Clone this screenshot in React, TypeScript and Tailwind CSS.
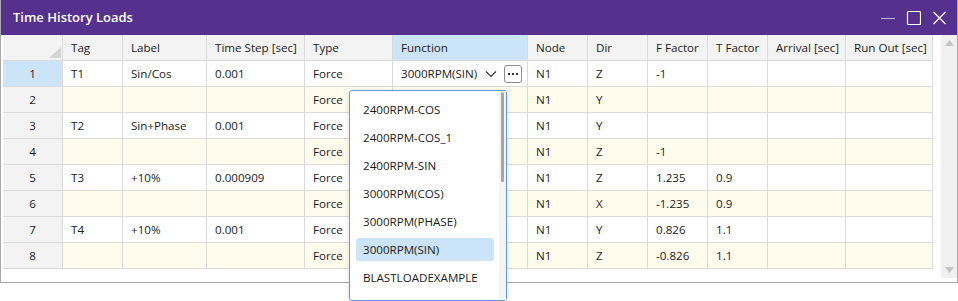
import React from 'react'

type Row = {
  no: number
  tag: string
  label: string
  step: string
  type: string
  fn: string
  node: string
  dir: string
  f: string
  t: string
}

const rows: Row[] = [
  { no: 1, tag: 'T1', label: 'Sin/Cos', step: '0.001', type: 'Force', fn: '3000RPM(SIN)', node: 'N1', dir: 'Z', f: '-1', t: '' },
  { no: 2, tag: '', label: '', step: '', type: 'Force', fn: '', node: 'N1', dir: 'Y', f: '', t: '' },
  { no: 3, tag: 'T2', label: 'Sin+Phase', step: '0.001', type: 'Force', fn: '', node: 'N1', dir: 'Y', f: '', t: '' },
  { no: 4, tag: '', label: '', step: '', type: 'Force', fn: '', node: 'N1', dir: 'Z', f: '-1', t: '' },
  { no: 5, tag: 'T3', label: '+10%', step: '0.000909', type: 'Force', fn: '', node: 'N1', dir: 'Z', f: '1.235', t: '0.9' },
  { no: 6, tag: '', label: '', step: '', type: 'Force', fn: '', node: 'N1', dir: 'X', f: '-1.235', t: '0.9' },
  { no: 7, tag: 'T4', label: '+10%', step: '0.001', type: 'Force', fn: '', node: 'N1', dir: 'Y', f: '0.826', t: '1.1' },
  { no: 8, tag: '', label: '', step: '', type: 'Force', fn: '', node: 'N1', dir: 'Z', f: '-0.826', t: '1.1' },
]

const functions = [
  '2400RPM-COS',
  '2400RPM-COS_1',
  '2400RPM-SIN',
  '3000RPM(COS)',
  '3000RPM(PHASE)',
  '3000RPM(SIN)',
  'BLASTLOADEXAMPLE',
]

const cell = 'h-full flex items-center pl-2 border-r border-[#dadada] shrink-0 whitespace-nowrap'

export default function App() {
  return (
    <div
      className="relative w-[958px] h-[301px] bg-white text-[11.6px] text-[#1b1b1b]"
      style={{ fontFamily: '"Open Sans", "Noto Sans", sans-serif' }}
    >
      {/* Window */}
      <div className="w-[958px] h-[283px] border border-[#a9a9a9] flex flex-col">
        {/* Title bar */}
        <div className="h-[35px] bg-[#55308d] flex items-center justify-between shrink-0 -mt-px">
          <span className="pl-[12px] pt-[1px] text-white text-[13px] font-semibold">Time History Loads</span>
          <div className="flex items-center gap-[10px] pr-[10px]">
            <svg width="16" height="16" viewBox="0 0 16 16">
              <line x1="2" y1="8.5" x2="17" y2="8.5" stroke="#b9a6d6" strokeWidth="1.2" />
            </svg>
            <svg width="16" height="16" viewBox="0 0 16 16">
              <rect x="2.5" y="1.5" width="13" height="13" rx="1" fill="none" stroke="#ffffff" strokeWidth="1.2" />
            </svg>
            <svg width="16" height="16" viewBox="0 0 16 16">
              <path d="M2.5 2 L14.5 14 M14.5 2 L2.5 14" stroke="#ffffff" strokeWidth="1.2" />
            </svg>
          </div>
        </div>

        {/* Body */}
        <div className="flex flex-1 pl-[2px] pr-0">
          {/* Grid */}
          <div className="w-[930px] flex flex-col">
            {/* Header */}
            <div className="flex h-[26px] border-b border-[#dadada] bg-[#f3f3f3]">
              <div className="w-[60px] h-full border-r border-[#dadada] relative shrink-0">
                <svg className="absolute right-[1px] bottom-[2px]" width="12" height="11" viewBox="0 0 12 11">
                  <polygon points="12,0 12,11 0,11" fill="#d5d5d5" />
                </svg>
              </div>
              <div className={`${cell} w-[60px]`}>Tag</div>
              <div className={`${cell} w-[84px]`}>Label</div>
              <div className={`${cell} w-[98px]`}>Time Step [sec]</div>
              <div className={`${cell} w-[88px]`}>Type</div>
              <div className={`${cell} w-[135px] bg-[#cce4f7]`}>Function</div>
              <div className={`${cell} w-[60px]`}>Node</div>
              <div className={`${cell} w-[60px]`}>Dir</div>
              <div className={`${cell} w-[60px]`}>F Factor</div>
              <div className={`${cell} w-[60px]`}>T Factor</div>
              <div className={`${cell} w-[78px]`}>Arrival [sec]</div>
              <div className={`${cell} w-[87px]`}>Run Out [sec]</div>
            </div>

            {rows.map((r) => (
              <div
                key={r.no}
                className={`flex h-[26px] border-b border-[#dadada] ${r.no % 2 === 0 ? 'bg-[#fffcee]' : 'bg-white'}`}
              >
                <div
                  className={`w-[60px] h-full flex items-center justify-center border-r border-[#dadada] shrink-0 ${r.no === 1 ? 'bg-[#cce4f7]' : 'bg-[#f3f3f3]'}`}
                >
                  {r.no}
                </div>
                <div className={`${cell} w-[60px]`}>{r.tag}</div>
                <div className={`${cell} w-[84px]`}>{r.label}</div>
                <div className={`${cell} w-[98px]`}>{r.step}</div>
                <div className={`${cell} w-[88px]`}>{r.type}</div>
                <div className={`${cell} w-[135px] pr-[5px]`}>
                  {r.no === 1 && (
                    <div className="flex items-center w-full">
                      <span>{r.fn}</span>
                      <svg className="ml-[8px]" width="12" height="8" viewBox="0 0 12 8">
                        <path d="M1 1.5 L6 6.5 L11 1.5" fill="none" stroke="#333" strokeWidth="1.1" />
                      </svg>
                      <div className="ml-auto w-[18px] h-[18px] border border-[#8c8c8c] rounded-[3px] flex items-center justify-center gap-[2px] bg-white">
                        <span className="w-[2px] h-[2px] bg-[#333]" />
                        <span className="w-[2px] h-[2px] bg-[#333]" />
                        <span className="w-[2px] h-[2px] bg-[#333]" />
                      </div>
                    </div>
                  )}
                </div>
                <div className={`${cell} w-[60px]`}>{r.node}</div>
                <div className={`${cell} w-[60px]`}>{r.dir}</div>
                <div className={`${cell} w-[60px]`}>{r.f}</div>
                <div className={`${cell} w-[60px]`}>{r.t}</div>
                <div className={`${cell} w-[78px]`}></div>
                <div className={`${cell} w-[87px]`}></div>
              </div>
            ))}
          </div>

          {/* Vertical scrollbar */}
          <div className="ml-[8px] w-[16px] h-[243px] bg-[#f0f0f0] flex flex-col items-center justify-between py-[5px]">
            <svg width="9" height="6" viewBox="0 0 9 6">
              <polygon points="4.5,0 9,6 0,6" fill="#c4c4c4" />
            </svg>
            <svg width="9" height="6" viewBox="0 0 9 6">
              <polygon points="0,0 9,0 4.5,6" fill="#c4c4c4" />
            </svg>
          </div>
        </div>
      </div>

      {/* Function dropdown */}
      <div className="absolute left-[349px] top-[90px] w-[158px] h-[211px] bg-white border border-[#5f9ad6] rounded-[3px] shadow-[0_2px_6px_rgba(0,0,0,0.12)] flex">
        <div className="flex-1 flex flex-col pt-[7px] pl-[6px] pr-[5px]">
          {functions.map((fn) => (
            <div
              key={fn}
              className={`h-[23px] mb-[5px] flex items-center pl-[7px] rounded-[3px] ${fn === '3000RPM(SIN)' ? 'bg-[#cce4f7]' : ''}`}
            >
              {fn}
            </div>
          ))}
        </div>
        <div className="w-[7px] bg-[#f4f4f4] flex justify-center pt-[1px]">
          <div className="w-[3px] h-[90px] bg-[#a6a6a6] rounded-full" />
        </div>
      </div>
    </div>
  )
}
